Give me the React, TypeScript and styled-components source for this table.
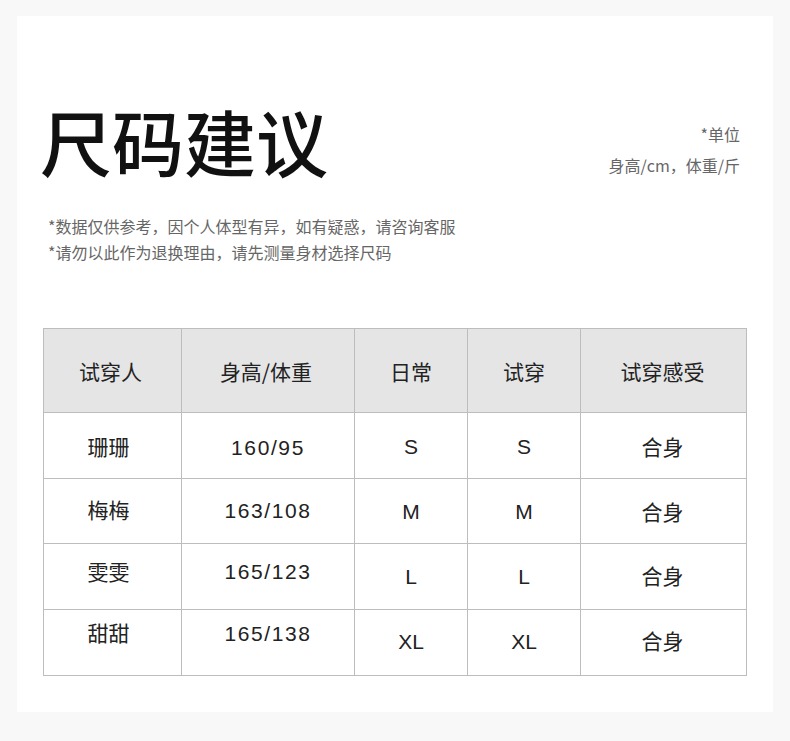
import React from "react";
import styled, { createGlobalStyle } from "styled-components";

const Global = createGlobalStyle`
  html, body { margin: 0; padding: 0; background: #f8f8f8; }
  body { font-family: "Noto Sans CJK SC", "Noto Sans", sans-serif; }
`;

const Page = styled.div`
  padding: 16px 17px 29px 17px;
`;

const Card = styled.div`
  background: #ffffff;
  width: 756px;
  height: 696px;
  box-sizing: border-box;
  padding: 0 27px 0 26px;
  display: flex;
  flex-direction: column;
`;

const Header = styled.div`
  display: flex;
  justify-content: space-between;
  align-items: flex-start;
  padding-top: 88px;
`;

const Title = styled.h1`
  margin: 0 0 0 -3px;
  font-family: "Noto Sans CJK SC", sans-serif;
  font-weight: 500;
  font-size: 72px;
  line-height: 1;
  color: #111;
`;

const Unit = styled.div`
  margin-top: 15px;
  margin-right: 6px;
  text-align: right;
  font-size: 16px;
  line-height: 31px;
  color: #666;
`;

const Notes = styled.div`
  margin-top: 32px;
  padding-left: 5px;
  font-size: 16px;
  line-height: 26px;
  color: #666;
`;

const Table = styled.table`
  margin-top: 63px;
  border-collapse: collapse;
  table-layout: fixed;
  width: 703px;
  color: #222;
`;

const Col = styled.col<{ $w: number }>`
  width: ${(p) => p.$w}px;
`;

const HeadCell = styled.th<{ $inset?: number }>`
  height: 83px;
  padding: 0 ${(p) => p.$inset ?? 0}px 0 0;
  background: #e5e5e5;
  border: 1px solid #bdbdbd;
  font-weight: 400;
  font-size: 21px;
  text-align: center;
  vertical-align: middle;
`;

const Cell = styled.td<{ $shift?: number; $inset?: number; $kind?: "cjk" | "num" | "size" }>`
  padding: ${(p) => Math.max(0, (p.$shift ?? 0) * 2)}px ${(p) => p.$inset ?? 0}px
    ${(p) => Math.max(0, -(p.$shift ?? 0) * 2)}px 0;
  border: 1px solid #bdbdbd;
  text-align: center;
  vertical-align: middle;
  font-size: 21px;
  font-family: ${(p) =>
    p.$kind === "num" || p.$kind === "size"
      ? `"Liberation Sans", Arial, sans-serif`
      : `"Noto Sans CJK SC", sans-serif`};
  letter-spacing: ${(p) => (p.$kind === "num" ? "1.6px" : "0")};
`;

const Row = styled.tr<{ $h: number }>`
  height: ${(p) => p.$h}px;
`;

const cols = [
  { label: "试穿人", w: 138, inset: 4 },
  { label: "身高/体重", w: 173, inset: 4 },
  { label: "日常", w: 113, inset: 0 },
  { label: "试穿", w: 113, inset: 0 },
  { label: "试穿感受", w: 166, inset: 2 },
];

type R = {
  name: string;
  hw: string;
  size: string;
  feel: string;
  h: number;
  s: [number, number, number, number];
};

const rows: R[] = [
  { name: "珊珊", hw: "160/95", size: "S", feel: "合身", h: 66, s: [0, 2.5, 1.5, 0.5] },
  { name: "梅梅", hw: "163/108", size: "M", feel: "合身", h: 65, s: [-2, 0, 1, 0] },
  { name: "雯雯", hw: "165/123", size: "L", feel: "合身", h: 66, s: [-6, -4.5, 0, -1.5] },
  { name: "甜甜", hw: "165/138", size: "XL", feel: "合身", h: 66, s: [-10.5, -8.5, -1, -2.5] },
];

export default function App() {
  return (
    <>
      <Global />
      <Page>
        <Card>
          <Header>
            <Title>尺码建议</Title>
            <Unit>
              <div>*单位</div>
              <div>身高/cm，体重/斤</div>
            </Unit>
          </Header>
          <Notes>
            <div>*数据仅供参考，因个人体型有异，如有疑惑，请咨询客服</div>
            <div>*请勿以此作为退换理由，请先测量身材选择尺码</div>
          </Notes>
          <Table>
            <colgroup>
              {cols.map((c) => (
                <Col key={c.label} $w={c.w} />
              ))}
            </colgroup>
            <thead>
              <tr>
                {cols.map((c) => (
                  <HeadCell key={c.label} $inset={c.inset}>
                    {c.label}
                  </HeadCell>
                ))}
              </tr>
            </thead>
            <tbody>
              {rows.map((r) => (
                <Row key={r.name} $h={r.h}>
                  <Cell $kind="cjk" $shift={r.s[0]} $inset={8}>{r.name}</Cell>
                  <Cell $kind="num" $shift={r.s[1]}>{r.hw}</Cell>
                  <Cell $kind="size" $shift={r.s[2]}>{r.size}</Cell>
                  <Cell $kind="size" $shift={r.s[2]}>{r.size}</Cell>
                  <Cell $kind="cjk" $shift={r.s[3]} $inset={2}>{r.feel}</Cell>
                </Row>
              ))}
            </tbody>
          </Table>
        </Card>
      </Page>
    </>
  );
}
